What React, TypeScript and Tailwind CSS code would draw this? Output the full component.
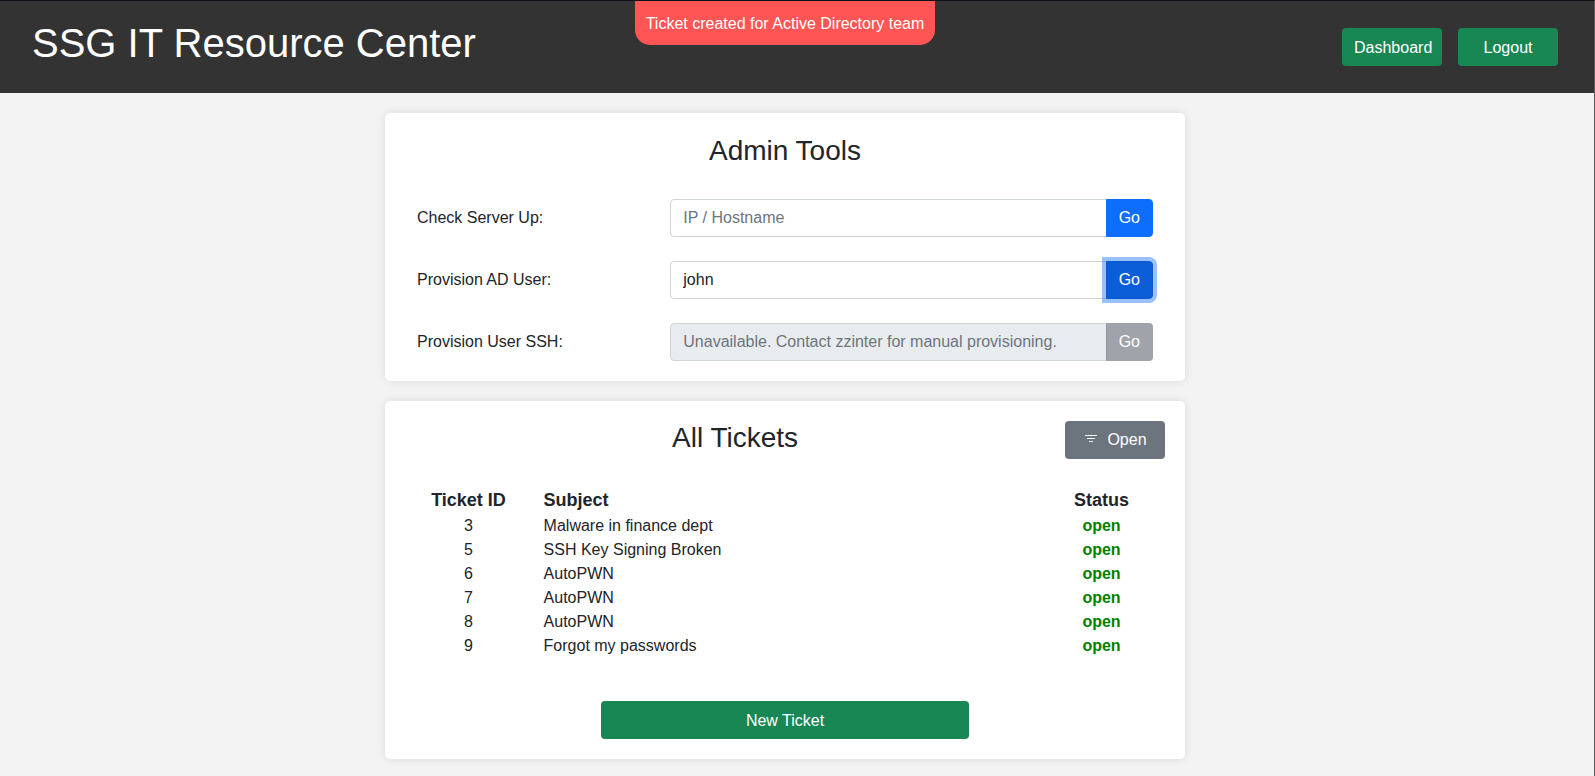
import { useState } from 'react';
import { BsFilter } from 'react-icons/bs';

type Ticket = {
  id: number;
  subject: string;
  status: 'open' | 'closed';
};

type Tool = {
  label: string;
  placeholder?: string;
  value?: string;
  state: 'idle' | 'active' | 'disabled';
};

const tickets: Ticket[] = [
  { id: 3, subject: 'Malware in finance dept', status: 'open' },
  { id: 5, subject: 'SSH Key Signing Broken', status: 'open' },
  { id: 6, subject: 'AutoPWN', status: 'open' },
  { id: 7, subject: 'AutoPWN', status: 'open' },
  { id: 8, subject: 'AutoPWN', status: 'open' },
  { id: 9, subject: 'Forgot my passwords', status: 'open' },
];

const tools: Tool[] = [
  { label: 'Check Server Up:', placeholder: 'IP / Hostname', state: 'idle' },
  { label: 'Provision AD User:', value: 'john', state: 'active' },
  {
    label: 'Provision User SSH:',
    placeholder: 'Unavailable. Contact zzinter for manual provisioning.',
    state: 'disabled',
  },
];

const goStyles = {
  idle: 'border-[#0d6efd] bg-[#0d6efd]',
  active: 'z-10 border-[#0a58ca] bg-[#0b5ed7] shadow-[0_0_0_4px_rgba(49,132,253,0.5)]',
  disabled: 'border-[#8f989f] border-y-[#a0a4aa] border-r-[#a0a4aa] bg-[#a0a4aa]',
};

function ToolRow({ tool }: { tool: Tool }) {
  const [value, setValue] = useState(tool.value ?? '');
  const disabled = tool.state === 'disabled';

  return (
    <div className="flex items-center">
      <label className="w-[253.3px]">{tool.label}</label>
      <div className="flex flex-1">
        <input
          type="text"
          value={value}
          placeholder={tool.placeholder}
          disabled={disabled}
          onChange={(e) => setValue(e.target.value)}
          className="h-[38px] min-w-0 flex-1 rounded-l border border-[#ced4da] bg-white px-3 text-[#212529] placeholder:text-[#6c757d] disabled:bg-[#e9ecef]"
        />
        <button
          disabled={disabled}
          className={`relative -ml-px h-[38px] rounded-r border px-3 text-white ${goStyles[tool.state]}`}
        >
          Go
        </button>
      </div>
    </div>
  );
}

export default function App() {
  return (
    <div className="h-[776px] overflow-hidden border-t border-r border-t-[#0f0f17] border-r-[#5c5c5c] bg-[#f3f3f3] font-['Liberation_Sans',Arial,sans-serif] text-base leading-6 text-[#212529]">
      {/* Header */}
      <header className="relative flex h-[92px] items-start justify-between bg-[#333] pr-9 pl-8 text-white">
        <h1 className="pt-[18px] text-[40px] leading-[48px]">SSG IT Resource Center</h1>
        <nav className="flex gap-4 pt-[27px]">
          <button className="h-[38px] w-[100px] rounded bg-[#198754] pt-px pl-3 text-left">Dashboard</button>
          <button className="h-[38px] w-[100px] rounded bg-[#198754] px-3 pt-px">Logout</button>
        </nav>
        <div className="absolute top-0 left-[635px] h-11 w-[300px] rounded-b-[15px] bg-[#f55] pt-[11px] text-center">
          Ticket created for Active Directory team
        </div>
      </header>

      <main className="flex w-[1570px] flex-col items-center gap-5 pt-5">
        {/* Admin tools */}
        <section className="h-[268px] w-[800px] rounded-[5px] bg-white p-5 shadow-[0_0_10px_rgba(0,0,0,0.1)]">
          <h3 className="pt-px text-center text-[28px] leading-[33.6px]">Admin Tools</h3>
          <div className="mt-[31.4px] flex flex-col gap-6 px-3">
            {tools.map((tool) => (
              <ToolRow key={tool.label} tool={tool} />
            ))}
          </div>
        </section>

        {/* Tickets */}
        <section className="flex h-[358px] w-[800px] flex-col rounded-[5px] bg-white p-5 shadow-[0_0_10px_rgba(0,0,0,0.1)]">
          <div className="flex h-[38px] items-start">
            <h3 className="flex-1 text-center text-[28px] leading-[33.6px]">All Tickets</h3>
            <button className="flex h-[38px] w-[100px] items-center justify-center gap-2 rounded bg-[#6c757d] text-white">
              <BsFilter size={16} className="mb-0.5" />
              Open
            </button>
          </div>
          <table className="mx-3 mt-7 table-fixed">
            <thead>
              <tr className="text-lg leading-[27px]">
                <th className="w-[103px] p-0 font-bold">Ticket ID</th>
                <th className="p-0 pl-[23.6px] text-left font-bold">Subject</th>
                <th className="w-[103px] p-0 font-bold">Status</th>
              </tr>
            </thead>
            <tbody>
              {tickets.map((t) => (
                <tr key={t.id}>
                  <td className="p-0 text-center">{t.id}</td>
                  <td className="p-0 pl-[23.6px]">{t.subject}</td>
                  <td className="p-0 text-center font-bold text-[#008000]">{t.status}</td>
                </tr>
              ))}
            </tbody>
          </table>
          <button className="mx-auto mt-auto h-[38px] w-[368px] rounded bg-[#198754] pt-px text-white">
            New Ticket
          </button>
        </section>
      </main>
    </div>
  );
}
